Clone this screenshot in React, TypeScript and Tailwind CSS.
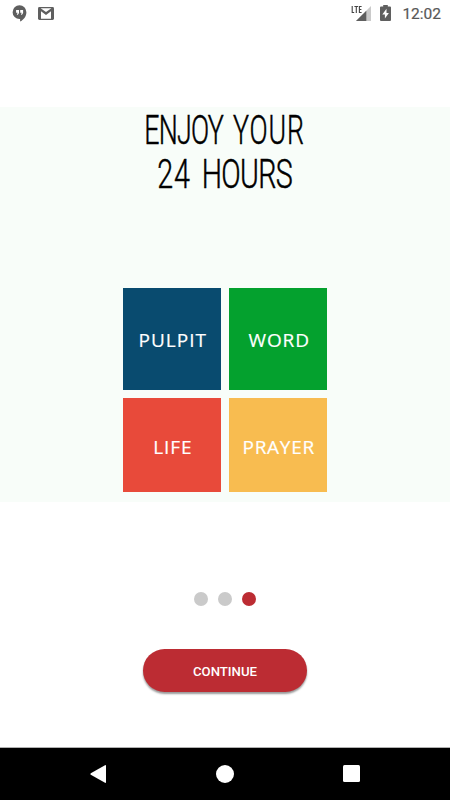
const tiles = [
  { label: "PULPIT", color: "bg-[#094b6f]", text: "tracking-[1px] pl-[2px] pt-[3px]" },
  { label: "WORD", color: "bg-[#04a12e]", text: "tracking-[0.9px] pl-[2px] pt-[3px]" },
  { label: "LIFE", color: "bg-[#e84a3a]", text: "tracking-[0.9px] pl-[2px] pt-[5px]" },
  { label: "PRAYER", color: "bg-[#f8bc50]", text: "tracking-[0.7px] pl-[1px] pt-[5px]" },
];

function StatusBar() {
  return (
    <header className="flex h-[27px] shrink-0 items-center justify-between pr-[9px] pl-[12px] text-[#585858]">
      <div className="flex items-center gap-[11px]">
        {/* Hangouts */}
        <svg className="-mt-px h-[17px] w-[15px]" viewBox="0 0 15 17" fill="none">
          <path fill="#5f5f5f" d="M7.5.3a6.9 6.9 0 0 0 0 13.8h.6v2.4c3.3-1.5 6.3-5 6.3-9.3A6.9 6.9 0 0 0 7.5.3Z" />
          <path fill="#fff" d="M4.1 5H7v3L5.9 9.7H4.8l.8-1.9H4.1ZM8.2 5h2.9v3L10 9.7H8.9l.8-1.9H8.2Z" />
        </svg>
        {/* Gmail */}
        <svg className="-mt-px h-[13px] w-4" viewBox="0 0 16 13" fill="none">
          <rect width="16" height="13" rx="1.4" fill="#5f5f5f" />
          <path fill="#fff" d="M2.6 1.2h10.8L8 5.1Z" />
          <path fill="#fff" d="M3 4.2 8 7.9l5-3.7v7.6H3Z" />
        </svg>
      </div>
      <div className="flex items-center">
        <svg className="-mt-px h-[17px] w-5" viewBox="0 0 20 17" fill="none">
          <path fill="#cacaca" d="M20 1v15H5Z" />
          <path fill="#5f5f5f" d="M15.3 5.7V16H5Z" />
          <path fill="#fff" d="M0 0h11.4v8.4H0Z" />
          <path stroke="#444" strokeWidth="1.1" d="M1.2 1v6.5h2M3.4 1.5h3.7M5.3 1.5V8M10.6 1.5H8.4v6h2.2M8.4 4.5h2" />
        </svg>
        <svg className="-mt-px ml-[9px] h-4 w-[11px]" viewBox="0 0 11 16">
          <path fill="#5f5f5f" d="M3.2 0h4.6v1.6H10q1 0 1 1V15q0 1-1 1H1q-1 0-1-1V2.6q0-1 1-1h2.2Z" />
          <path fill="#fff" d="M6.5 3.7 2.3 9.4h2.6v4.2l4-5.7H6.5Z" />
        </svg>
        <span className="mt-[2px] ml-[11px] text-[15.5px] leading-none [-webkit-text-stroke:0.2px_#585858]">12:02</span>
      </div>
    </header>
  );
}

export default function App() {
  return (
    <div className="flex h-[800px] w-[450px] flex-col overflow-hidden bg-white font-['Roboto',sans-serif]">
      <StatusBar />

      {/* Slide */}
      <main className="mt-[80px] flex h-[395px] shrink-0 flex-col items-center bg-[#f8fdf9]">
        <h1 className="flex h-[88px] flex-col items-center pt-px text-[41.5px] leading-[43.5px] font-light whitespace-nowrap text-black [-webkit-text-stroke:0.5px_black]">
          <span className="scale-x-[0.645] tracking-[1.4px] [word-spacing:4px]">
            <span className="tracking-[-1.2px]">ENJOY</span> YOUR
          </span>
          <span className="scale-x-[0.69] tracking-[-0.9px] [word-spacing:7px]">
            <span className="tracking-[1px]">24</span> HOURS
          </span>
        </h1>
        <div className="mt-[93px] grid grid-cols-[98.4px_98.4px] grid-rows-[102px_94px] gap-2">
          {tiles.map((tile) => (
            <div key={tile.label} className={`flex items-center justify-center ${tile.color}`}>
              <span className={`font-['Open_Sans',sans-serif] text-[19px] leading-none font-medium text-white [-webkit-text-stroke:0.2px_white] ${tile.text}`}>
                {tile.label}
              </span>
            </div>
          ))}
        </div>
      </main>

      {/* Page dots */}
      <div className="mt-[90px] flex shrink-0 justify-center gap-[10.6px]">
        <span className="size-[13.6px] rounded-full bg-[#cacaca]" />
        <span className="size-[13.6px] rounded-full bg-[#cacaca]" />
        <span className="size-[13.6px] rounded-full bg-[#bc2c33]" />
      </div>

      <button className="mt-[43.4px] h-[43.5px] w-[164.5px] shrink-0 self-center rounded-full bg-[#bc2c33] pt-[2px] text-[13.2px] font-medium text-white shadow-[0_2px_2px_rgba(0,0,0,0.4)]">
        CONTINUE
      </button>

      {/* Android navigation bar */}
      <nav className="mt-auto flex h-[53px] shrink-0 items-center justify-between border-t border-[#b0b0b0] bg-black pr-[90px] pb-[0.6px] pl-[90px]">
        <svg className="h-[18px] w-4" viewBox="0 0 16 18" fill="#fff">
          <path d="M15 .2q1-.4 1 .8v16q0 1.2-1 .8L.8 9.8Q0 9 .8 8.2Z" />
        </svg>
        <span className="size-[18px] rounded-full bg-white" />
        <span className="size-[17px] rounded-[1.5px] bg-white" />
      </nav>
    </div>
  );
}
